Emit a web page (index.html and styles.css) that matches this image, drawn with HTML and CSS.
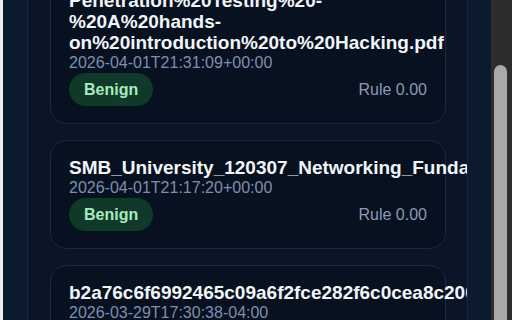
FILE: index.html
```html
<!DOCTYPE html>
<html lang="en">
<head>
<meta charset="utf-8">
<title>Scan history</title>
<link rel="stylesheet" href="styles.css">
</head>
<body>
<div class="edge"></div>
<div class="page">
  <div class="panel">
    <div class="list">
      <div class="card">
        <div class="title">Penetration%20Testing%20-%20A%20hands-on%20introduction%20to%20Hacking.pdf</div>
        <div class="date">2026-04-01T21:31:09+00:00</div>
        <div class="row">
          <span class="pill">Benign</span>
          <span class="rule">Rule 0.00</span>
        </div>
      </div>
      <div class="card">
        <div class="title">SMB_University_120307_Networking_Fundamentals.pdf</div>
        <div class="date">2026-04-01T21:17:20+00:00</div>
        <div class="row">
          <span class="pill">Benign</span>
          <span class="rule">Rule 0.00</span>
        </div>
      </div>
      <div class="card">
        <div class="title">b2a76c6f6992465c09a6f2fce282f6c0cea8c2007e1d4f3a</div>
        <div class="date">2026-03-29T17:30:38-04:00</div>
        <div class="row">
          <span class="pill">Benign</span>
          <span class="rule">Rule 0.00</span>
        </div>
      </div>
    </div>
  </div>
</div>
<div class="scrollbar"><div class="thumb"></div></div>
</body>
</html>
```
FILE: styles.css
```css
html, body {
  margin: 0;
  height: 100%;
}
body {
  display: flex;
  overflow: hidden;
  font-family: "Liberation Sans", Arial, sans-serif;
  background: #0c1a2d;
}
.edge {
  width: 3px;
  flex: none;
  background: #eceef1;
}
.page {
  flex: 1;
  display: flex;
  padding: 0 23px 0 24px;
  background: #0c1a2d;
  min-width: 0;
}
.panel {
  flex: 1;
  min-width: 0;
  overflow: hidden;
  border-left: 1px solid #172740;
  border-right: 1px solid #172740;
  background: #0a1527;
  padding: 0 21px 0 22px;
}
.list {
  display: flex;
  flex-direction: column;
  gap: 16px;
  margin-top: -27px;
}
.card {
  border: 1px solid #182840;
  border-radius: 16px;
  background: #08111f;
  padding: 16px 18px 17px;
}
.title {
  font-size: 19px;
  line-height: 21px;
  font-weight: 700;
  color: #f1f5f9;
}
.date {
  font-size: 16px;
  line-height: 20px;
  color: #7d8fb0;
}
.row {
  display: flex;
  justify-content: space-between;
  align-items: center;
}
.pill {
  background: #10392a;
  color: #a6ebbd;
  font-weight: 700;
  font-size: 16px;
  line-height: 19px;
  padding: 7px 15px;
  border-radius: 999px;
}
.rule {
  color: #8a9bb8;
  font-size: 16px;
}
.scrollbar {
  width: 21px;
  flex: none;
  background: #2f2d2b;
  padding: 65px 0 0 3px;
  box-sizing: border-box;
}
.thumb {
  width: 13px;
  height: 100%;
  background: #a9a9a9;
  border-radius: 7px 7px 0 0;
}
```
